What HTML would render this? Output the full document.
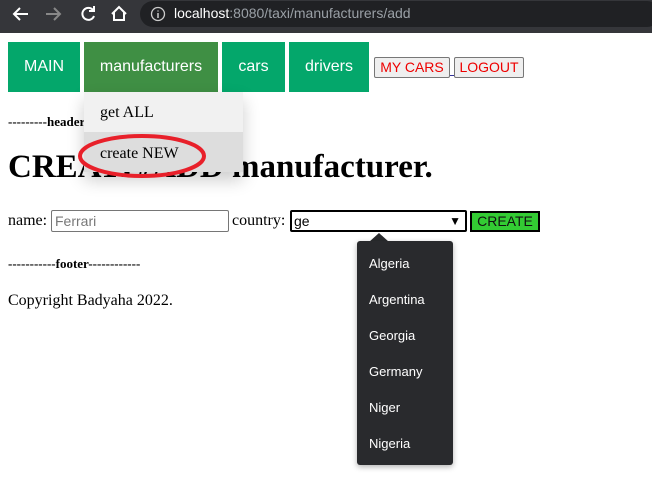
<!DOCTYPE html>
<html><head><style>
body{margin:0;width:652px;height:481px;overflow:hidden;background:#fff;font-family:"Liberation Serif",serif;position:relative}
.a{position:absolute}
.bar{left:0;top:0;width:652px;height:33px;background:#35363a}
.pill{left:140px;top:1px;width:520px;height:26px;background:#202124;border-radius:13px}
.url{left:174px;top:5px;font:14px "Liberation Sans",sans-serif;color:#9aa0a6}
.url b{color:#fff;font-weight:normal}
.nav{top:42px;height:50px;color:#fff;font:16px "Liberation Sans",sans-serif;line-height:50px;text-align:center;background:#04a76b}
.btn{top:57px;height:19px;border:1px solid #777;border-radius:2px;background:#efefef;color:#e00;font:14px "Liberation Sans",sans-serif;line-height:19px;text-align:center}
.dd{left:84px;top:92px;width:159px;height:80px;box-shadow:0 8px 16px rgba(0,0,0,.2)}
.pop{left:357px;top:241px;width:96px;height:224px;background:#292a2d;border-radius:3px;box-shadow:0 2px 6px rgba(0,0,0,.3)}
.pop div{height:36px;padding-left:12px;color:#fff;font:13px "Liberation Sans",sans-serif;line-height:36px}
</style></head><body>
<div class="a bar"></div>
<div class="a pill"></div>
<svg class="a" style="left:0;top:0" width="140" height="30"><g stroke="#fff" stroke-width="2" fill="none"><path d="M28 14H14M20 8l-6 6 6 6"/><path stroke="#888" d="M46 14h14M54 8l6 6-6 6"/><path d="M93 10a6 6 0 1 0 1 6M94 6v5h-5"/><path d="M112 14l7-7 7 7M114 12v8h10v-8"/></g></svg>
<svg class="a" style="left:150px;top:6px" width="16" height="16"><circle cx="8" cy="8" r="6.5" stroke="#ccc" fill="none" stroke-width="1.3"/><path d="M8 7v5M8 4.5v1" stroke="#ccc" stroke-width="1.5"/></svg>
<div class="a url"><b>localhost</b>:8080/taxi/manufacturers/add</div>
<div class="a nav" style="left:8px;width:72px">MAIN</div>
<div class="a nav" style="left:84px;width:134px;background:#3f8f44">manufacturers</div>
<div class="a nav" style="left:222px;width:63px">cars</div>
<div class="a nav" style="left:289px;width:80px">drivers</div>
<div class="a btn" style="left:374px;width:74px">MY CARS</div>
<div class="a" style="left:450px;top:75px;width:4px;height:1px;background:#339"></div>
<div class="a btn" style="left:454px;width:68px">LOGOUT</div>
<div class="a" style="left:8px;top:114px;font-size:13px;font-weight:bold">---------header</div>
<div class="a" style="left:8px;top:149px;font-size:33px;font-weight:bold">CREATE/ADD manufacturer.</div>
<div class="a dd"><div style="height:40px;background:#f1f1f1;line-height:42px;padding-left:16px;font-size:16px">get ALL</div><div style="height:40px;background:#ddd;line-height:44px;padding-left:16px;font-size:16px">create NEW</div></div>
<svg class="a" style="left:76px;top:133px" width="132" height="48"><ellipse cx="66" cy="23" rx="62" ry="20" fill="none" stroke="#e8202a" stroke-width="4"/></svg>
<div class="a" style="left:8px;top:212px;font-size:16px">name:</div>
<div class="a" style="left:51px;top:210px;height:20px;border:1px solid #767676;border-radius:2px;font:14px 'Liberation Sans',sans-serif;color:#777;line-height:20px;padding-left:3px;width:173px">Ferrari</div>
<div class="a" style="left:232px;top:212px;font-size:16px">country:</div>
<div class="a" style="left:290px;top:210px;width:171px;height:18px;border:2px solid #000;border-radius:2px;font:14px 'Liberation Sans',sans-serif;line-height:18px;padding-left:2px">ge<span style="position:absolute;right:4px;font-size:12px">▼</span></div>
<div class="a" style="left:470px;top:211px;width:66px;height:17px;border:2px solid #000;background:#33cc33;font:14px 'Liberation Sans',sans-serif;line-height:17px;text-align:center;color:#111">CREATE</div>
<div class="a" style="left:8px;top:256px;font-size:13px;font-weight:bold">-----------footer------------</div>
<div class="a" style="left:8px;top:292px;font-size:16px">Copyright Badyaha 2022.</div>
<svg class="a" style="left:369px;top:232px" width="20" height="10"><path d="M0 10L10 1 20 10Z" fill="#292a2d"/></svg>
<div class="a pop" style="padding-top:5px;box-sizing:border-box"><div>Algeria</div><div>Argentina</div><div>Georgia</div><div>Germany</div><div>Niger</div><div>Nigeria</div></div>
</body></html>
